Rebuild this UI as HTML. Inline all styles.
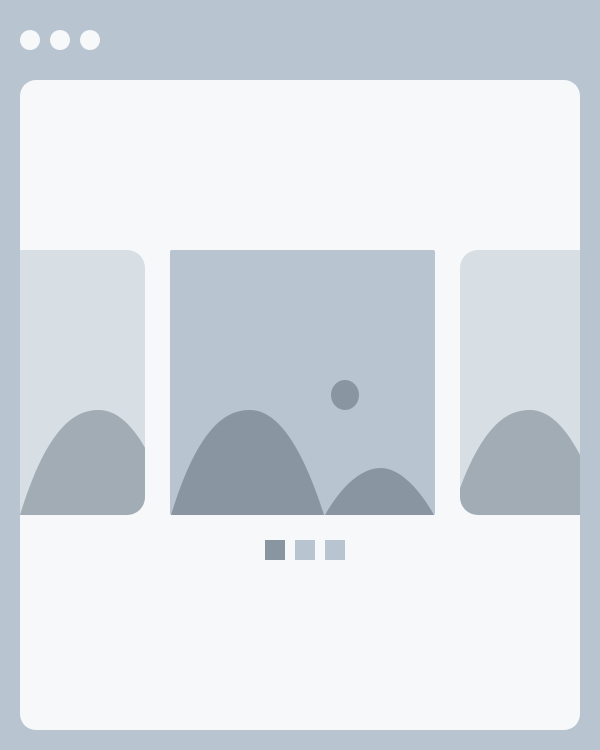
<!DOCTYPE html>
<html><head><meta charset="utf-8"><style>
html,body{margin:0;padding:0;}
body{width:600px;height:750px;background:#b8c4d0;position:relative;overflow:hidden;font-family:"Liberation Sans",sans-serif;}
.dot{position:absolute;top:30px;width:20px;height:20px;border-radius:50%;background:#f6f8fa;}
.panel{position:absolute;left:20px;top:80px;width:560px;height:650px;background:#f6f8fa;border-radius:16px;overflow:hidden;}
svg{position:absolute;left:0;top:0;}
</style></head><body>
<div class="dot" style="left:20px"></div>
<div class="dot" style="left:50px"></div>
<div class="dot" style="left:80px"></div>
<div class="panel"></div>
<svg width="600" height="750" viewBox="0 0 600 750">
<defs>
<clipPath id="cl"><rect x="-20" y="250" width="165" height="265" rx="18"/></clipPath>
<clipPath id="cm"><rect x="170" y="250" width="265" height="265" rx="2"/></clipPath>
<clipPath id="cr"><rect x="460" y="250" width="165" height="265" rx="18"/></clipPath>
<clipPath id="cp"><rect x="20" y="80" width="560" height="650"/></clipPath>
</defs>
<g clip-path="url(#cp)">
<g clip-path="url(#cl)">
<rect x="-20" y="250" width="165" height="265" fill="#d7dee4"/>
<path d="M20 515 C49 420,79 410,99 410 C124 410,149 440,173 515 Z" fill="#a1acb5"/>
</g>
<g clip-path="url(#cm)">
<rect x="170" y="250" width="265" height="265" fill="#b8c4d0"/>
<path d="M171 515 C200 420,230 410,250 410 C275 410,300 440,324 515 Z" fill="#8995a0"/>
<path d="M325 515 C345 480,365 468,381 468 C400 468,420 490,434 515 Z" fill="#8995a0"/>
<ellipse cx="345" cy="395" rx="14" ry="15" fill="#8995a0"/>
</g>
<g clip-path="url(#cr)">
<rect x="460" y="250" width="165" height="265" fill="#d7dee4"/>
<path d="M451 515 C480 420,510 410,530 410 C555 410,580 440,604 515 Z" fill="#a1acb5"/>
</g>
</g>
<rect x="265" y="540" width="20" height="20" fill="#8995a0"/>
<rect x="295" y="540" width="20" height="20" fill="#b8c4d0"/>
<rect x="325" y="540" width="20" height="20" fill="#b8c4d0"/>
</svg>
</body></html>
